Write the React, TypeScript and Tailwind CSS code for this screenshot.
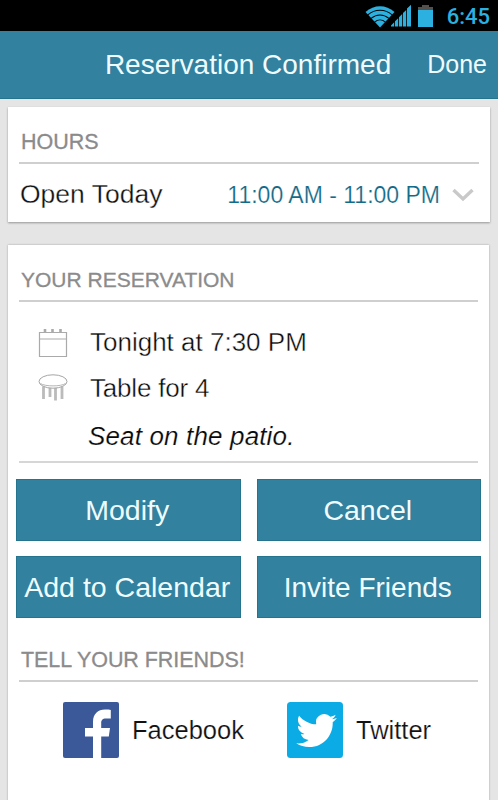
import type { ReactNode } from "react";

function StatusBar() {
  return (
    <div className="flex h-[31px] shrink-0 items-center justify-end bg-black pr-2 text-[#2cb0e0]">
      <svg width="30" height="23" viewBox="0 0 30 23" fill="none" className="mt-[2px] shrink-0">
        <path d="M0.5 7C9 -0.8 21 -0.8 29.5 7L15 22.5Z" fill="currentColor" />
        <path d="M2.8 9.8C10 3.7 20 3.7 27.2 9.8" stroke="#000" strokeWidth="1.1" />
        <path d="M6.1 13.4C11.5 8.8 18.5 8.8 23.9 13.4" stroke="#000" strokeWidth="1.1" />
        <path d="M9.6 17.1C12.8 14.3 17.2 14.3 20.4 17.1" stroke="#000" strokeWidth="1.1" />
      </svg>
      <svg width="21" height="23" viewBox="0 0 21 23" fill="currentColor" className="-ml-1 shrink-0">
        <path d="M0 22.5V21.5L3.2 18.3V22.5ZM4 22.5V17.3L7.2 14.2V22.5ZM8 22.5V13.2L11.2 10.1V22.5ZM12 22.5V9L15.2 5.9V22.5ZM16 22.5V4.4L20 0.8V22.5Z" />
      </svg>
      <svg width="15" height="22" viewBox="0 0 15 22" className="ml-[6px] shrink-0">
        <path d="M4 0H11V2H15V6H0V2H4Z" fill="#55504c" />
        <path d="M0 5H15V22H0Z" fill="currentColor" />
      </svg>
      <span className="mt-[2px] ml-[14px] font-['Roboto',sans-serif] text-[22px] leading-none font-medium">6:45</span>
    </div>
  );
}

function SectionTitle({ children, className }: { children: ReactNode; className: string }) {
  return (
    <h2
      className={`mx-[11px] h-[57px] border-b-2 border-[#cfcfcf] pt-[23px] pl-[2px] leading-[24px] whitespace-nowrap text-[#8b8b8b] [-webkit-text-stroke:0.3px_#8b8b8b] ${className}`}
    >
      {children}
    </h2>
  );
}

function ActionButton({ children, className }: { children: string; className: string }) {
  return (
    <button
      type="button"
      className={`h-[62px] border border-[#25748f] bg-[#32819e] pt-px pr-[2px] whitespace-nowrap text-[#effcff] ${className}`}
    >
      {children}
    </button>
  );
}

function CalendarIcon() {
  return (
    <svg width="30" height="30" viewBox="0 0 30 30" fill="none" stroke="#aaa">
      <path d="M1.5 4.5H28.5V28.5H1.5ZM1.5 11H28.5" strokeWidth="1.2" />
      <path d="M7 1V4M14.5 1V4M22.5 1V4" strokeWidth="2.6" />
    </svg>
  );
}

function TableIcon() {
  return (
    <svg width="30" height="28" viewBox="0 0 30 28" fill="none" stroke="#a5a5a5">
      <path d="M5.5 12.5V25M12 14V23M17.5 14V26.5M24 12.5V25" stroke="#bbb" strokeWidth="2.8" />
      <ellipse cx="15" cy="7.5" rx="14" ry="6.7" fill="#fff" />
      <path d="M2.5 9.5C7 12.7 23 12.7 27.5 9.5" stroke="#b5b5b5" />
    </svg>
  );
}

function FacebookLogo() {
  return (
    <svg width="56" height="56" viewBox="0 0 56 56">
      <rect width="56" height="56" rx="2" fill="#3b5998" />
      <path
        d="M30 56V34.5H22V26H30V20C30 11.8 35 7.5 42 7.5C44.5 7.5 46.5 7.7 47.8 7.9V16.5H43C39.3 16.5 38.2 18.3 38.2 21V26H47L45.8 34.5H38.2V56Z"
        fill="#fff"
      />
    </svg>
  );
}

function TwitterLogo() {
  return (
    <svg width="56" height="56" viewBox="0 0 56 56">
      <rect width="56" height="56" rx="3.5" fill="#0babe6" />
      <path
        transform="translate(9.3 8.3) scale(1.69)"
        d="M23.953 4.57a10 10 0 01-2.825.775 4.958 4.958 0 002.163-2.723c-.951.555-2.005.959-3.127 1.184a4.92 4.92 0 00-8.384 4.482C7.69 8.095 4.067 6.13 1.64 3.162a4.822 4.822 0 00-.666 2.475c0 1.71.87 3.213 2.188 4.096a4.904 4.904 0 01-2.228-.616v.06a4.923 4.923 0 003.946 4.827 4.996 4.996 0 01-2.212.085 4.936 4.936 0 004.604 3.417 9.867 9.867 0 01-6.102 2.105c-.39 0-.779-.023-1.17-.067a13.995 13.995 0 007.557 2.209c9.053 0 13.998-7.496 13.998-13.985 0-.21 0-.42-.015-.63A9.935 9.935 0 0024 4.59z"
        fill="#fff"
      />
    </svg>
  );
}

export default function App() {
  return (
    <div className="flex h-[800px] w-[498px] flex-col overflow-hidden bg-[#e5e5e5] font-['Liberation_Sans',Arial,sans-serif]">
      <StatusBar />

      <header className="flex h-[68px] shrink-0 items-center justify-end border-b border-[#25748f] bg-[#32819e] pr-[11px] whitespace-nowrap text-[#effcff]">
        <h1 className="mt-px text-[28px]">Reservation Confirmed</h1>
        <button type="button" className="ml-[36px] text-[25px]">Done</button>
      </header>

      <section className="mx-2 mt-2 h-[115px] shrink-0 bg-white shadow-[0_1px_2px_rgba(0,0,0,0.35)]">
        <SectionTitle className="text-[21.5px]">HOURS</SectionTitle>
        <div className="mx-[11px] flex h-[60px] items-center whitespace-nowrap">
          <span className="mt-px ml-px text-[26.5px] text-[#111] [-webkit-text-stroke:0.3px_white]">Open Today</span>
          <span className="mt-[2px] ml-auto text-[23px] text-[#116a87] [-webkit-text-stroke:0.2px_white]">
            11:00 AM - 11:00 PM
          </span>
          <svg width="22" height="14" viewBox="0 0 22 14" fill="none" className="mt-[2px] mr-[5px] ml-[12px]">
            <path d="M1.5 2L11 11L20.5 2" stroke="#c9c9c9" strokeWidth="3.4" />
          </svg>
        </div>
      </section>

      <section className="mt-[23px] mr-[9px] ml-2 h-[570px] shrink-0 bg-white shadow-[0_0_2px_rgba(0,0,0,0.3)]">
        <SectionTitle className="text-[21px]">YOUR RESERVATION</SectionTitle>

        <div className="mx-[11px] h-[161px] border-b-2 border-[#d6d6d6] pt-[18px] text-[26px] leading-[45px] whitespace-nowrap text-[#080808]">
          <div className="flex h-[45px] items-center">
            <div className="ml-[19px] w-[52px]"><CalendarIcon /></div>
            <span className="[-webkit-text-stroke:0.4px_white]">Tonight at 7:30 PM</span>
          </div>
          <div className="flex h-[45px] items-center">
            <div className="ml-[19px] w-[52px]"><TableIcon /></div>
            <span className="mt-px tracking-[-0.2px] [-webkit-text-stroke:0.4px_white]">Table for 4</span>
          </div>
          <p className="mt-[4px] ml-[69px] tracking-[0.15px] italic [-webkit-text-stroke:0.2px_white]">Seat on the patio.</p>
        </div>

        <div className="mx-2 mt-4 grid grid-cols-2 gap-x-4 gap-y-[15px]">
          <ActionButton className="text-[28.5px]">Modify</ActionButton>
          <ActionButton className="text-[28.5px]">Cancel</ActionButton>
          <ActionButton className="text-[28.5px]">Add to Calendar</ActionButton>
          <ActionButton className="text-[28px]">Invite Friends</ActionButton>
        </div>

        <SectionTitle className="mt-[7px] text-[21.5px] tracking-[-0.05px]">TELL YOUR FRIENDS!</SectionTitle>

        <div className="mt-5 ml-[55px] flex text-[25.5px] whitespace-nowrap text-[#111]">
          <a className="flex w-[224px] items-center gap-[13px]">
            <FacebookLogo />
            <span className="mt-px [-webkit-text-stroke:0.2px_white]">Facebook</span>
          </a>
          <a className="flex items-center gap-[13px]">
            <TwitterLogo />
            <span className="mt-px [-webkit-text-stroke:0.2px_white]">Twitter</span>
          </a>
        </div>
      </section>
    </div>
  );
}
